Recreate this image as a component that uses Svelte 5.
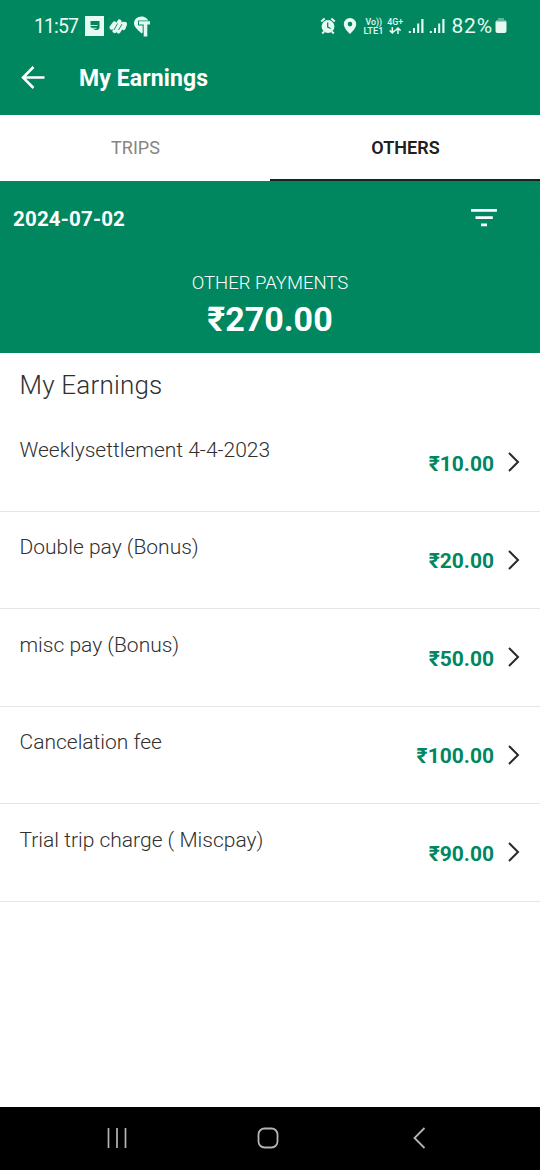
<script>
  const payments = [
    { label: 'Weeklysettlement 4-4-2023', amount: '₹10.00' },
    { label: 'Double pay (Bonus)', amount: '₹20.00' },
    { label: 'misc pay (Bonus)', amount: '₹50.00' },
    { label: 'Cancelation fee', amount: '₹100.00' },
    { label: 'Trial trip charge ( Miscpay)', amount: '₹90.00' }
  ];
</script>

<div class="screen">
  <div class="status">
    <span class="clock">11:57</span>
    <svg class="notices" width="68" height="24" viewBox="84 14 68 24" fill="#e6faf2">
      <path d="M85 16h19v20H85z" />
      <path d="M90.500 21h9v6q0 3-3 3h-1.500l-4.500-3z" fill="#00875f" />
      <path d="M90 25.500h7.500M90 28.300h6.500" stroke="#c5ecdd" stroke-width="1" />
      <g fill="none" stroke="#e6faf2" stroke-width="4.200" stroke-linecap="round">
        <path d="M111.500 27.500l3-4M114.500 31l5-9.500M118.500 31.500l4.500-7.500M123.500 28l1.500-4" />
      </g>
      <path d="M114 30l3.500-6.500M118.500 30l3.500-6" fill="none" stroke="#00875f" stroke-width=".9" />
      <path d="M141.500 16.500c-4.400 0-7.500 3-7.500 6.800 0 3.200 2.500 5.700 7.500 10.200l4-3 3.500-8c-1-3.500-3.500-6-7.500-6z" />
      <path d="M138 20.500h13v5h-2.300V37h-6V25.500H138z" fill="#00875f" />
      <path d="M139 21.300h11v3.200h-2.700V36.500h-3.600V24.500H139z" />
    </svg>
    <svg class="system" width="126" height="28" viewBox="319 12 126 28" fill="#e6faf2">
      <circle cx="328" cy="26.500" r="6.400" />
      <path d="M321.200 21.500l3.500-3M331.300 18.500l3.500 3M324.200 31.500l-2 2M331.800 31.500l2 2" stroke="#e6faf2" stroke-width="1.900" />
      <path d="M327.700 22.500v4.500l3 1.500" stroke="#00875f" stroke-width="1.300" fill="none" />
      <path fill-rule="evenodd" d="M350 18a6.200 6.200 0 0 0-6.200 6.200c0 4.200 6.200 9.800 6.200 9.800s6.200-5.600 6.200-9.800A6.200 6.200 0 0 0 350 18zm0 3.800a2.300 2.300 0 1 1 0 4.600 2.300 2.300 0 0 1 0-4.600z" />
      <g class="tiny">
        <text x="365.500" y="24.800" textLength="16.500" lengthAdjust="spacingAndGlyphs">Vo))</text>
        <text x="363.500" y="33.600" textLength="20" lengthAdjust="spacingAndGlyphs">LTE1</text>
        <text x="387.300" y="25.300" textLength="16" lengthAdjust="spacingAndGlyphs">4G+</text>
      </g>
      <path d="M392.300 27v6m-2.600-2.600 2.600 2.600 2.600-2.600M398 34v-6m-2.600 2.600L398 28l2.600 2.600" fill="none" stroke="#e6faf2" stroke-width="1.500" />
      <path d="M408.800 31h2v2h-2zM413 28h2v5h-2zM417.200 23.500h2V33h-2zM421.300 19h2.200v14h-2.200zM429.800 31h2v2h-2zM434 28h2v5h-2zM438.200 23.500h2V33h-2zM442.300 19h2.200v14h-2.200z" />
    </svg>
    <span class="percent">82%</span>
    <svg class="battery" width="12" height="16" viewBox="0 0 12 16" fill="#e6faf2">
      <path d="M3 0h6v2h2v2H1V2h2z" opacity=".4" />
      <path d="M.5 3.500h11V13q0 2-2 2h-7q-2 0-2-2z" />
    </svg>
  </div>

  <header>
    <svg width="26" height="26" viewBox="0 0 26 26" fill="none" stroke="#fff" stroke-width="2.500">
      <path d="M24.500 12.500H3M13.500 2 3 12.500 13.500 23" />
    </svg>
    <h1>My Earnings</h1>
  </header>

  <nav class="tabs">
    <div class="tab"><span>TRIPS</span></div>
    <div class="tab active"><span>OTHERS</span></div>
  </nav>

  <div class="date">
    <span>2024-07-02</span>
    <svg width="26" height="18" viewBox="0 0 26 18" fill="#fff">
      <path d="M0 0h26v2.800H0zM4.500 7.200h17.300V10H4.500zM10 14.500h6v2.800h-6z" />
    </svg>
  </div>

  <section class="total">
    <span class="caption">OTHER PAYMENTS</span>
    <strong>₹270.00</strong>
  </section>

  <main>
    <h2>My Earnings</h2>
    {#each payments as payment}
      <div class="row">
        <span class="label">{payment.label}</span>
        <span class="amount">{payment.amount}</span>
        <svg width="14" height="22" viewBox="0 0 14 22" fill="none" stroke="#292929" stroke-width="2">
          <path d="M2 2 11 11 2 20" />
        </svg>
      </div>
    {/each}
  </main>

  <footer>
    <svg width="22" height="22" viewBox="0 0 22 22" stroke="#b4b4b4" stroke-width="1.700">
      <path d="M1.500 1v20M10 1v20M18.500 1v20" />
    </svg>
    <svg width="22" height="22" viewBox="0 0 22 22" fill="none" stroke="#b4b4b4" stroke-width="1.800">
      <rect x="1.500" y="1.500" width="19" height="19" rx="6" />
    </svg>
    <svg width="22" height="22" viewBox="0 0 22 22" fill="none" stroke="#b4b4b4" stroke-width="1.800">
      <path d="M18.500 1 8.500 11l10 10" />
    </svg>
  </footer>
</div>

<style>
  :global(body) { margin: 0; background: #fff; }
  .screen {
    width: 540px;
    height: 1170px;
    display: flex;
    flex-direction: column;
    font-family: Roboto, sans-serif;
    background: #fff;
    overflow: hidden;
  }
  svg { display: block; flex: none; }
  span, strong, h1, h2 { white-space: nowrap; }
  .status {
    box-sizing: border-box;
    height: 52px;
    padding-left: 34px;
    display: flex;
    align-items: center;
    background: #00875f;
    color: #e6faf2;
    font-size: 20px;
  }
  .clock { width: 50px; font-size: 19.5px; letter-spacing: -.9px; }
  .system { margin-left: 167px; }
  .percent { width: 43.5px; margin-left: 6.5px; font-size: 21px; letter-spacing: .8px; }
  .tiny { font-size: 9.5px; font-weight: 500; }
  header {
    box-sizing: border-box;
    height: 63px;
    padding: 0 20px 11px;
    display: flex;
    align-items: center;
    background: #00875f;
    color: #fff;
  }
  h1 { margin: 2px 0 0 33px; font-size: 23px; font-weight: 700; line-height: 28px; letter-spacing: .12px; }
  .tabs { height: 66px; display: flex; }
  .tab {
    box-sizing: border-box;
    flex: 1;
    padding: 22px 0 0 1px;
    text-align: center;
    font-size: 18px;
    line-height: 21px;
    color: #858585;
  }
  .active { color: #202020; font-weight: 600; border-bottom: 2px solid #182420; }
  .date {
    box-sizing: border-box;
    height: 73px;
    padding: 2px 43px 0 13px;
    display: flex;
    align-items: center;
    justify-content: space-between;
    background: #00875f;
    color: #fff;
    font-size: 20.5px;
    font-weight: 700;
    letter-spacing: .18px;
    border-bottom: 1px solid #05815b;
  }
  .date span { padding-top: 2px; }
  .total {
    box-sizing: border-box;
    height: 99px;
    padding-top: 18px;
    display: flex;
    flex-direction: column;
    align-items: center;
    background: #00875f;
    color: #fff;
  }
  .caption { font-size: 18.5px; line-height: 22px; font-weight: 300; }
  strong { font-size: 34px; line-height: 42px; margin-top: 4px; }
  main { flex: 1; }
  h2 {
    margin: 0;
    height: 45px;
    padding: 16px 0 0 19.5px;
    font-size: 26px;
    line-height: 32px;
    font-weight: 300;
    letter-spacing: .2px;
    color: #303030;
  }
  .row {
    box-sizing: border-box;
    height: 97.5px;
    padding: 0 19px 0 19.5px;
    display: flex;
    align-items: center;
    border-bottom: 1px solid #e5e5e5;
  }
  .label {
    flex: 1;
    align-self: flex-start;
    padding-top: 22.500px;
    font-size: 21px;
    line-height: 26px;
    font-weight: 300;
    color: #303030;
  }
  .amount { font-size: 21px; line-height: 26px; font-weight: 700; color: #00875f; margin: 2.500px 13px 0 0; }
  footer {
    box-sizing: border-box;
    height: 63px;
    padding: 0 112px 2px 107px;
    display: flex;
    align-items: center;
    justify-content: space-between;
    background: #000;
  }
</style>
